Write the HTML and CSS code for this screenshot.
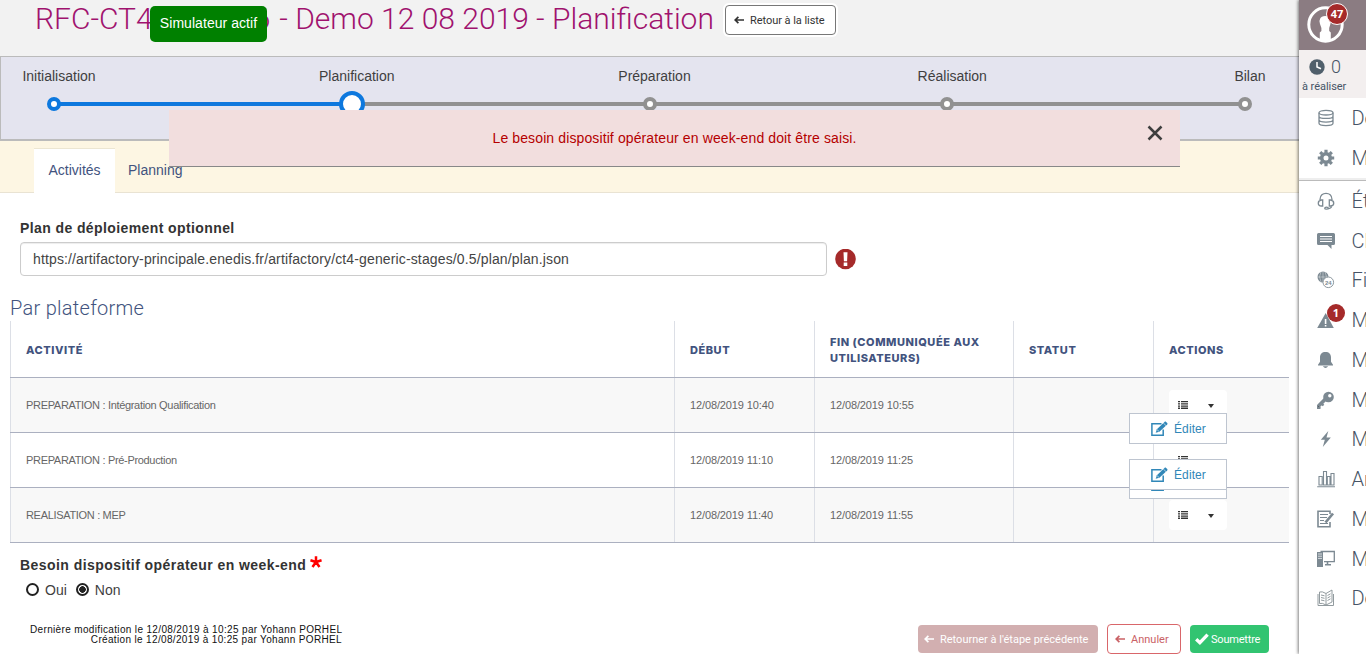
FILE: index.html
```html
<!DOCTYPE html>
<html lang="fr">
<head>
<meta charset="utf-8">
<title>Planification</title>
<link rel="stylesheet" href="styles.css">
</head>
<body>
<svg class="defs" width="0" height="0">
  <symbol id="arrow" viewBox="0 0 10 8"><path d="M4.400 .8 1.200 4l3.200 3.200M1.500 4H10" fill="none" stroke="currentColor" stroke-width="1.700"/></symbol>
  <symbol id="list" viewBox="0 0 10 8"><path d="M0 0h2v1.300H0zM3 0h7v1.300H3zM0 2.200h2v1.300H0zM3 2.200h7v1.300H3zM0 4.400h2v1.300H0zM3 4.400h7v1.300H3zM0 6.600h2v1.300H0zM3 6.600h7v1.300H3z" fill="currentColor"/></symbol>
  <symbol id="edit" viewBox="0 0 17 16"><path d="M10.500 2.700H.9v11.500h11.300V8.500" fill="none" stroke="currentColor" stroke-width="1.500"/><path d="m4.700 11.800 1.200-3.600L13.500.9c.6-.5 1-.5 1.600 0l1.100 1c.5.5.5 1 0 1.500L8.400 10.700z" fill="currentColor"/><path d="m12.300 2 2.700 2.600M6 8.600l2 1.800" stroke="#fff" stroke-width=".6"/></symbol>
</svg>
<div class="app">
  <main class="main">
    <header class="header">
      <h1 class="title">RFC-CT4<span class="number">-000006</span> - Demo 12 08 2019 - Planification</h1>
      <a class="back"><svg width="10" height="8"><use href="#arrow"/></svg><span>Retour à la liste</span></a>
      <div class="simulator">Simulateur actif</div>
    </header>

    <section class="stepper">
      <ol class="steps">
        <li>Initialisation</li><li>Planification</li><li>Préparation</li><li>Réalisation</li><li>Bilan</li>
      </ol>
      <svg class="track" width="1298" height="28" viewBox="1 90 1298 28">
        <path d="M352 104h893" stroke="#919191" stroke-width="4"/>
        <path d="M54 104h298" stroke="#0d78de" stroke-width="4"/>
        <g fill="#fff" stroke-width="4">
          <circle cx="54" cy="104" r="5" stroke="#0d78de"/>
          <circle cx="352" cy="104" r="11" stroke="#0d78de"/>
          <g stroke="#919191"><circle cx="650" cy="104" r="5"/><circle cx="947" cy="104" r="5"/><circle cx="1245" cy="104" r="5"/></g>
        </g>
      </svg>
    </section>

    <nav class="tabs"><a class="tab tab-active">Activités</a><a class="tab">Planning</a></nav>

    <div class="alert">
      <span>Le besoin dispositif opérateur en week-end doit être saisi.</span>
      <svg class="close" width="16" height="16" viewBox="0 0 16 16"><path d="m1.500 1.500 13 13m0-13-13 13" stroke="#3f3f3f" stroke-width="2.500"/></svg>
    </div>

    <label class="label plan-label" for="plan">Plan de déploiement optionnel</label>
    <div class="plan">
      <input id="plan" class="input" value="https://artifactory-principale.enedis.fr/artifactory/ct4-generic-stages/0.5/plan/plan.json">
      <svg width="21" height="21" viewBox="0 0 21 21"><circle cx="10.500" cy="10" r="10.300" fill="#a52a2a"/><path d="M8.500 3.200h4l-.4 9H8.900zM8.700 13.600h3.600v3.400H8.700z" fill="#fff"/></svg>
    </div>

    <h2 class="subtitle">Par plateforme</h2>
    <div class="table">
      <div class="row head"><div>ACTIVITÉ</div><div>DÉBUT</div><div>FIN (COMMUNIQUÉE AUX UTILISATEURS)</div><div>STATUT</div><div>ACTIONS</div></div>
      <div class="row odd">
        <div class="activity">PREPARATION : Intégration Qualification</div><div>12/08/2019 10:40</div><div>12/08/2019 10:55</div><div></div>
        <div class="actions"><span class="menu-button"><svg width="10" height="8"><use href="#list"/></svg><i class="caret"></i></span>
          <a class="menu"><svg width="17" height="16"><use href="#edit"/></svg>Éditer</a></div>
      </div>
      <div class="row">
        <div class="activity">PREPARATION : Pré-Production</div><div>12/08/2019 11:10</div><div>12/08/2019 11:25</div><div></div>
        <div class="actions"><span class="menu-button"><svg width="10" height="8"><use href="#list"/></svg><i class="caret"></i></span>
          <a class="menu"><svg width="17" height="16"><use href="#edit"/></svg>Éditer</a></div>
      </div>
      <div class="row odd">
        <div class="activity">REALISATION : MEP</div><div>12/08/2019 11:40</div><div>12/08/2019 11:55</div><div></div>
        <div class="actions"><span class="menu-button"><svg width="10" height="8"><use href="#list"/></svg><i class="caret"></i></span>
          <a class="menu menu-up"><svg width="17" height="16"><use href="#edit"/></svg>Éditer</a></div>
      </div>
    </div>

    <div class="label need">Besoin dispositif opérateur en week-end <svg width="12" height="12" viewBox="0 0 11 11"><path d="M5.500 5.500V.2M5.500 5.500.4 3.900M5.500 5.500l5.100-1.600M5.500 5.500l-3.200 4.600M5.500 5.500l3.200 4.600" stroke="red" stroke-width="2.300"/></svg></div>
    <div class="radios">
      <label><i class="radio"></i>Oui</label>
      <label><i class="radio checked"></i>Non</label>
    </div>

    <footer class="footer">
      <p class="audit">Dernière modification le 12/08/2019 à 10:25 par Yohann PORHEL<br>Création le 12/08/2019 à 10:25 par Yohann PORHEL</p>
      <div class="buttons">
        <a class="btn previous"><svg width="10" height="8"><use href="#arrow"/></svg><span>Retourner à l'étape précédente</span></a>
        <a class="btn cancel"><svg width="10" height="8"><use href="#arrow"/></svg><span>Annuler</span></a>
        <a class="btn submit"><svg width="14" height="12" viewBox="0 0 14 12"><path d="m1.200 6.200 3.700 3.500L12.600 1.600" fill="none" stroke="#fff" stroke-width="3.300"/></svg><span>Soumettre</span></a>
      </div>
    </footer>
  </main>

  <aside class="side">
    <div class="user">
      <svg width="37" height="37" viewBox="0 0 37 37"><circle cx="18.500" cy="18.500" r="16.700" fill="none" stroke="#fff" stroke-width="3"/><path d="M13 18q-1-4 .2-5.500 1-2.500 5-2.500t5 2.500q1.200 1.500.2 5.500l-1.200 4v3l1.600 1.500v7q-5.500 2-11 0v-7l1.600-1.500v-3z" fill="#fff"/></svg>
      <span class="badge user-badge">47</span>
    </div>
    <div class="todo">
      <div class="todo-count"><svg width="16" height="16" viewBox="0 0 16 16"><circle cx="8" cy="8" r="7.700" fill="#505f6b"/><path d="M8 3v5l4 1.800" fill="none" stroke="#fff" stroke-width="1.500"/></svg><span>0</span></div>
      <div class="todo-label">à réaliser</div>
    </div>
    <ul class="menu-list top">
      <li><svg viewBox="0 0 18 18" fill="none" stroke="#7c8992" stroke-width="1.300"><ellipse cx="9" cy="3.700" rx="7" ry="2.300"/><path d="M2 3.700v10.600c0 3 14 3 14 0V3.700M2 7.200c0 3 14 3 14 0M2 10.800c0 3 14 3 14 0"/></svg><span>Des</span></li>
      <li><svg viewBox="0 0 18 18"><circle cx="9" cy="9" r="4.300" fill="none" stroke="#7c8992" stroke-width="3.600"/><path d="M9 .8v3m0 10.400v3M.8 9h3m10.400 0h3M3.200 3.200l2 2m7.600 7.600 2 2m0-11.600-2 2m-7.600 7.600-2 2" stroke="#7c8992" stroke-width="3.200"/></svg><span>Mes</span></li>
    </ul>
    <ul class="menu-list rest">
      <li><svg viewBox="0 0 18 18" fill="none" stroke="#7c8992" stroke-width="1.300"><path d="M3 9V7.500C3-.8 15-.8 15 7.500V9M5.700 8v6H4.500C.2 14 .2 8.500 4.500 8zM12.300 8v6h1.200c4.300 0 4.300-5.500 0-6zM14.500 14c0 2-1.500 2.500-3.500 2.500"/><ellipse cx="9.500" cy="16.200" rx="1.800" ry="1"/></svg><span>Éta</span></li>
      <li><svg viewBox="0 0 18 18"><path d="M1.500 1h15Q18 1 18 2.500v9q0 1.500-1.500 1.500h-2v4l-4-4h-9Q0 13 0 11.500v-9Q0 1 1.500 1z" fill="#7c8992"/><path d="M3 4.500h12M3 7h12M3 9.500h12" stroke="#fff" stroke-width="1.200"/></svg><span>Che</span></li>
      <li><svg viewBox="0 0 18 18"><circle cx="6" cy="6" r="5.500" fill="#7c8992"/><path d="M.5 6h11M6 .5v11M4 .8q-3 5 0 10M8 .8q3 5 0 10" stroke="#fff" stroke-width=".4" fill="none"/><circle cx="11.300" cy="11.300" r="5.300" fill="#fff" stroke="#8d989f"/><text x="11.300" y="13.500" class="mini">24</text></svg><span>Fil</span></li>
      <li><svg viewBox="0 0 18 18"><path d="m8.700 2 8.100 15H.2z" fill="#7c8992"/><path d="M8.600 8v5M8.600 14v1.500" stroke="#fff" stroke-width="1.600"/></svg><span>Mes</span><b class="badge alert-badge">1</b></li>
      <li><svg viewBox="0 0 18 18"><path d="M8.500 1C12 1 14 3 14 6.500v4.300l2 3v.8H1v-.8l2-3V6.500C3 3 5 1 8.500 1zM5.800 15.300h5.400Q8.500 18.500 5.800 15.300z" fill="#7c8992"/></svg><span>Mes</span></li>
      <li><svg viewBox="0 0 18 18"><circle cx="11.500" cy="6" r="5.300" fill="#7c8992"/><path d="m8.500 8-7 7" stroke="#7c8992" stroke-width="3.800"/><path d="m4 12 2.500 2.500M.5 14v3h3" stroke="#7c8992" stroke-width="2.200"/><circle cx="12.800" cy="4.700" r="1.700" fill="#fff"/></svg><span>Mes</span></li>
      <li><svg viewBox="0 0 18 18"><path d="M11.300 1 3.800 9.700h4L5.800 17l8-9.500H9.500z" fill="#7c8992"/></svg><span>Mes</span></li>
      <li><svg viewBox="0 0 18 18" fill="none" stroke="#7c8992" stroke-width="1.100"><path d="M.2 16.700h17.800M2 15V6.500h3.200V15zM6.500 15V1.500h3V15zM10.300 15V6.500h2.700V15zM14 15V3.500h3V15z"/></svg><span>Ann</span></li>
      <li><svg viewBox="0 0 18 18" fill="none" stroke="#7c8992"><path d="M13 4V1.200H1v15.500h12V12" stroke-width="1.600"/><path d="M3 4.500h8M3 7.500h7M3 10.500h4M3 13.500h8" stroke-width="1.200"/><path d="m8.500 12.500 7.500-9" stroke-width="2.700"/></svg><span>Mes</span></li>
      <li><svg viewBox="0 0 18 18"><path d="M0 2h6v15H0z" fill="#7c8992"/><path d="M1 4h4M1 6.200h4M1 8.400h4" stroke="#fff" stroke-width=".7"/><path d="M3.500 1.500h13.800v10.200H7" fill="none" stroke="#7c8992" stroke-width="1.300"/><path d="M10.500 12v2M8 14.700h6" stroke="#7c8992" stroke-width="1.600"/></svg><span>Mes</span></li>
      <li><svg viewBox="0 0 18 18" fill="none" stroke="#929b9f" stroke-width="1"><path d="M9 4.500Q5 2 2.500 3v11.500Q5 13.500 9 16M9 4.500 15 1v12L9 16zM1 5v11.500h15.500V5M4 6l3.500.8M4 8.500l3.500.8M4 11l3.500.8M10.500 6.500l3-1.700M10.500 9l3-1.700M10.500 11.500l3-1.700"/></svg><span>Doc</span></li>
    </ul>
  </aside>
</div>
</body>
</html>
```

FILE: styles.css
```css
* { box-sizing: border-box; }
body { margin: 0; font-family: "Liberation Sans", Arial, sans-serif; font-size: 14px; color: #3f3f3f; background: #fff; }
h1, h2, p, ol, ul { margin: 0; padding: 0; list-style: none; font-weight: 300; }
svg { flex: none; display: block; }
.defs { position: absolute; }
.app { display: grid; grid-template-columns: 1299px 67px; width: 1366px; height: 654px; overflow: hidden; }
.main { position: relative; min-width: 0; overflow: hidden; }

.header { position: relative; display: flex; align-items: flex-start; height: 56px; padding-left: 35px; background: #f2f2f2; }
.title { width: 690px; font: 300 30px/37px Roboto, sans-serif; color: #a0126e; white-space: nowrap; }
.number { letter-spacing: 1.55px; }
.back { display: flex; align-items: center; gap: 6px; width: 111px; height: 30px; margin-top: 5px; padding-left: 8px; border: 1px solid #777; border-radius: 4px; background: #fff; box-shadow: 0 0 0 2px #fff; font: 11px Roboto, sans-serif; letter-spacing: -.05px; white-space: nowrap; color: #333; }
.simulator { position: absolute; left: 150px; top: 6px; width: 117px; height: 36px; border-radius: 5px; background: green; color: #fff; text-align: center; line-height: 34px; letter-spacing: .05px; }

.stepper { height: 85px; border: 1px solid #bbb; border-bottom-width: 2px; border-right: 0; background: #e4e4ef; overflow: hidden; }
.steps { display: flex; justify-content: space-between; padding: 11px 9px 0 18px; height: 33px; line-height: 16px; }
.steps li { width: 80px; text-align: center; white-space: nowrap; font-weight: 400; }

.tabs { display: flex; align-items: flex-end; height: 52px; padding-left: 34px; background: #fdf6e3; border-bottom: 1px solid #e9e3d3; }
.tab { height: 45px; padding: 15px 13px 0; line-height: 16px; color: #42537e; }
.tab-active { width: 81px; margin-bottom: -1px; padding: 13px 0 0; text-align: center; background: #fff; border-top: 1px solid #ece6d2; }
.alert { position: absolute; left: 169px; top: 110px; width: 1011px; height: 57px; background: #f2dede; border-bottom: 1px solid #888; color: #b50000; text-align: center; line-height: 57px; letter-spacing: .115px; }
.close { position: absolute; right: 17px; top: 15px; }

.label { font-weight: bold; line-height: 16px; letter-spacing: .4px; color: #333; }
.plan-label { display: block; margin: 27px 0 6px 20px; }
.plan { display: flex; align-items: center; gap: 8px; margin-left: 20px; }
.input { width: 807px; height: 34px; padding: 0 12px; border: 1px solid #ccc; border-radius: 4px; box-shadow: inset 0 1px 1px rgba(0,0,0,.075); font: 14px "Liberation Sans", Arial, sans-serif; letter-spacing: .137px; color: #444; }
.subtitle { margin: 18px 0 0 10px; height: 27px; font: 300 20px/29px Roboto, sans-serif; letter-spacing: .28px; color: #42537e; }

.table { width: 1279px; margin-left: 10px; }
.row { display: grid; grid-template-columns: 664px 140px 199px 140px 136px; height: 55px; border-bottom: 1px solid #abb0c0; font-size: 11px; letter-spacing: -.12px; color: #666; }
.row > div { display: flex; align-items: center; padding: 0 15px; border-left: 1px solid #dcdfe6; }
.row > .activity { letter-spacing: -.32px; }
.head { height: 57px; font: 800 11px/16px Inter, sans-serif; letter-spacing: .55px; color: #42537e; }
.head > div { padding-top: 2px; }
.odd { background: #f8f8f8; }
.row > .actions { position: relative; letter-spacing: 0; }
.menu-button { display: flex; align-items: center; gap: 20px; width: 58px; height: 30px; padding-left: 9px; border-radius: 4px; background: #fff; color: #333; }
.caret { border: 3.5px solid transparent; border-top: 4px solid #333; border-bottom: 0; margin-top: 2px; }
.menu { position: absolute; z-index: 1; left: -25px; top: 35px; width: 98px; height: 31px; display: flex; align-items: center; gap: 6px; padding-left: 21px; border: 1px solid #bec5d0; background: #fff; font-size: 12px; letter-spacing: .1px; color: #3187b8; }
.menu-up { top: -29px; }

.need { display: flex; gap: 4px; margin: 14px 0 0 20px; letter-spacing: .44px; }
.need svg { margin-top: -1px; }
.radios { display: flex; gap: 9px; margin: 9px 0 0 26px; line-height: 16px; }
.radios label { display: flex; align-items: center; gap: 6px; }
.radio { width: 13px; height: 13px; margin-top: -1px; border: 2px solid #222; border-radius: 50%; background: #fff; }
.checked { background: radial-gradient(circle, #222 0 3px, #fff 3.6px); }
.footer { display: flex; justify-content: space-between; margin-top: 26px; padding: 0 30px; }
.audit { width: 312px; padding-top: 1px; text-align: right; font-size: 10px; line-height: 10px; letter-spacing: .345px; color: #111; white-space: nowrap; }
.buttons { display: flex; align-items: center; gap: 9px; }
.btn { display: flex; align-items: center; gap: 6px; height: 28px; border-radius: 4px; font: 11px Roboto, sans-serif; color: #fff; white-space: nowrap; }
.previous { width: 180px; padding-left: 6px; background: #d2afb0; }
.cancel { width: 74px; height: 30px; padding-left: 7px; border: 1px solid #d9666a; color: #ca6266; }
.submit { width: 79px; gap: 2px; padding-left: 5px; background: #32c471; letter-spacing: -.2px; }

.side { position: relative; z-index: 2; min-width: 0; height: 654px; background: #fff; box-shadow: -1px 0 3px rgba(0,0,0,.5); }
.user { position: relative; height: 50px; padding: 6px 0 0 8px; background: #8b7c82; }
.badge { position: absolute; border-radius: 50%; background: #a52a2a; color: #fff; text-align: center; font: bold 11px/18px "Open Sans", sans-serif; }
.user-badge { left: 27px; top: 3px; width: 22px; height: 22px; border: 1.5px solid #fff; line-height: 19px; }
.todo { height: 48px; padding: 7px 0 0 10px; background: #f3efef; }
.todo-count { display: flex; align-items: center; gap: 6px; height: 20px; font: 300 18px/20px Roboto, sans-serif; color: #465466; }
.todo-label { margin-left: -7px; padding-top: 1px; font: 11px/18px Roboto, sans-serif; letter-spacing: -.05px; color: #465466; white-space: nowrap; }
.menu-list { overflow: hidden; }
.menu-list li { position: relative; display: flex; align-items: center; gap: 17px; height: 39.8px; padding-left: 17.5px; font: 300 20px/24px Roboto, sans-serif; color: #465466; }
.menu-list svg { width: 18px; height: 18px; }
.top { height: 83px; border-bottom: 1px solid #bbb; box-shadow: inset 0 -2px #eee; }
.rest li { height: 39.75px; }
.alert-badge { left: 28px; top: 4px; width: 18px; height: 18px; }
.mini { font: bold 6px "Liberation Sans", sans-serif; fill: #7c8992; text-anchor: middle; }
```
